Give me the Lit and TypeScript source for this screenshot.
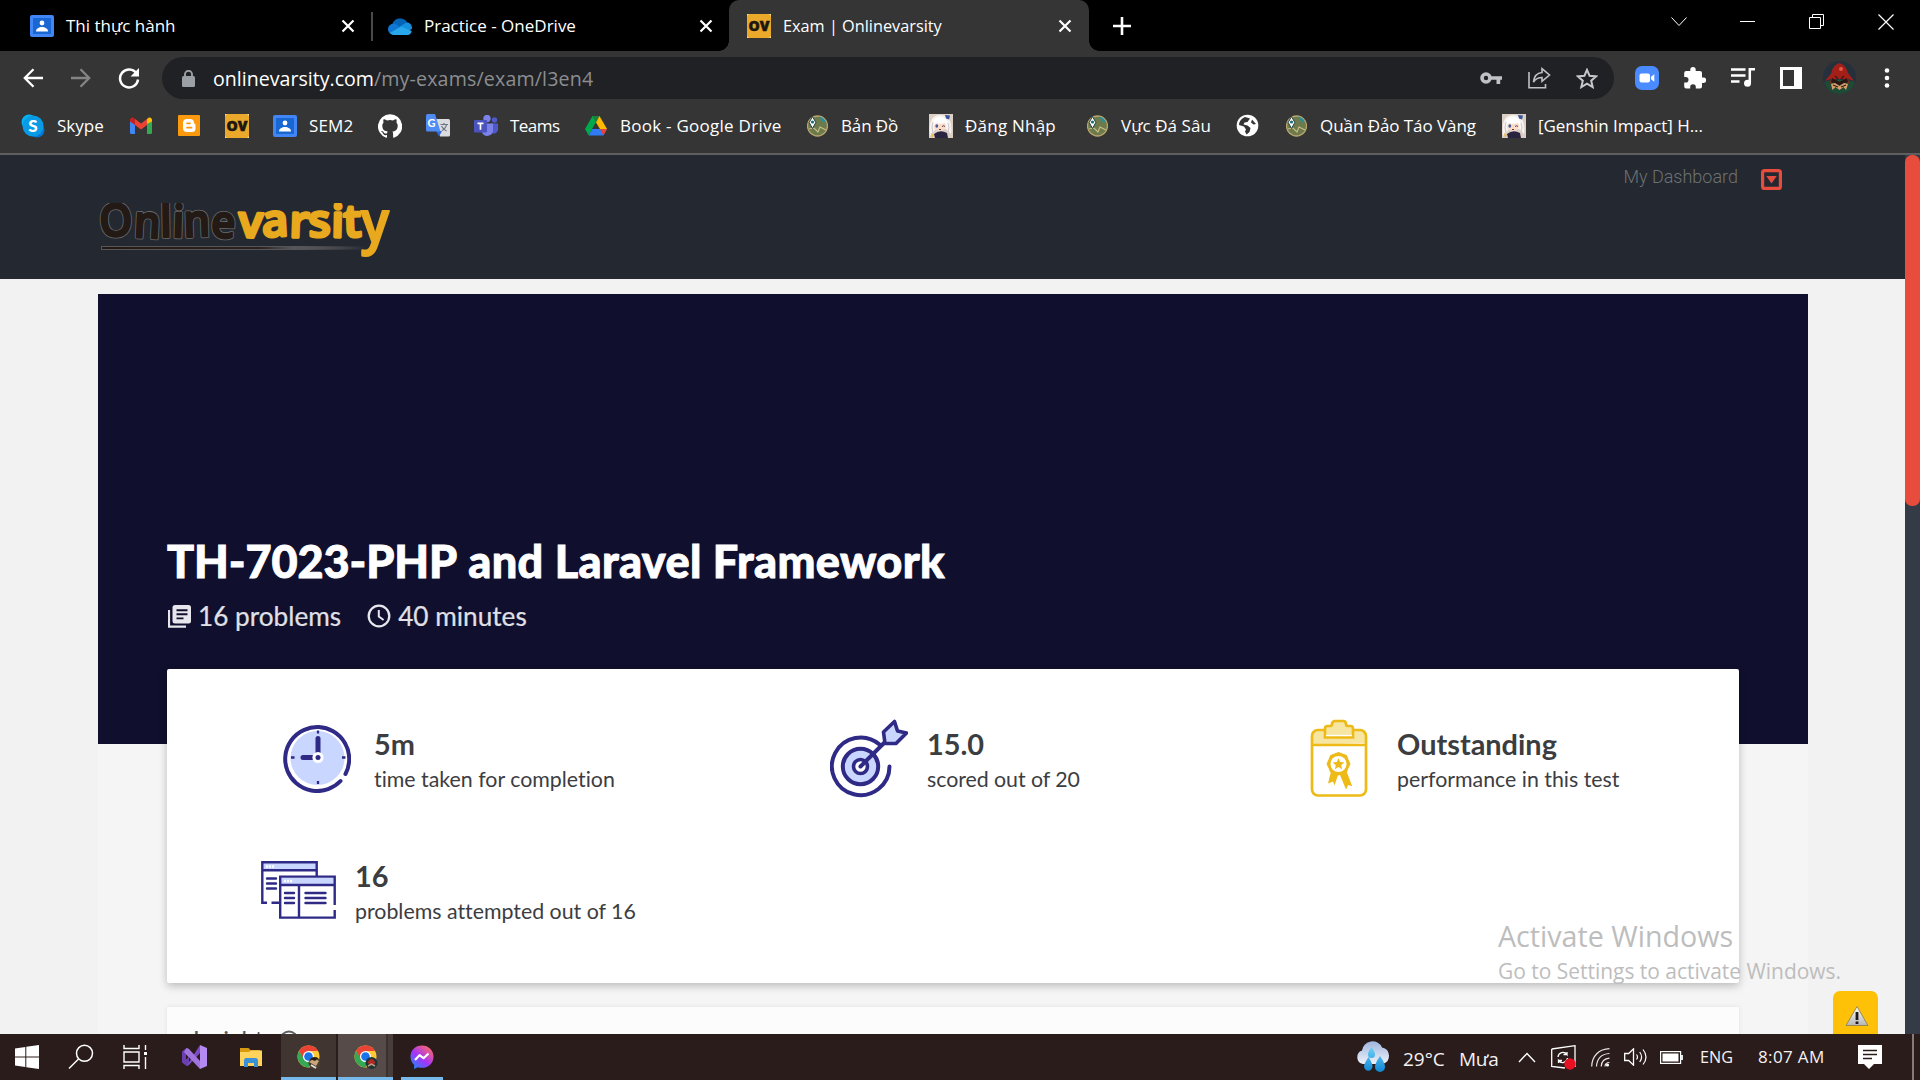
import { LitElement, html, css, svg, nothing } from "lit";
import type { TemplateResult } from "lit";
import { customElement } from "lit/decorators.js";
import { classMap } from "lit/directives/class-map.js";
import { styleMap } from "lit/directives/style-map.js";

const icon = (w: number, h: number, body: unknown, box = `0 0 ${w} ${h}`) =>
  html`<svg width=${w} height=${h} viewBox=${box} fill="none" style="display:block;flex:none">${body}</svg>`;

/* ---------- favicons ---------- */
const classroom = icon(24, 22, svg`
  <rect width="24" height="22" rx="2" fill="#4285f4"/>
  <rect x="3" y="3" width="18" height="16" fill="#1967d2"/>
  <circle cx="12" cy="8" r="2.4" fill="#fff"/>
  <path d="M6 16.500c0-3 3-4.500 6-4.500s6 1.500 6 4.500z" fill="#fff"/>`);
const oneDrive = icon(24, 18, svg`
  <path d="M4.500 7A8 7.500 0 0 1 19 5L13 11 2 13z" fill="#0364b8"/>
  <path d="M0 12.500A5.800 5.800 0 0 1 6.500 6.500L17 13l-5 4H5a5 5 0 0 1-5-4.500z" fill="#0f78d4"/>
  <path d="M12 9.500 18.500 5.200A5.800 5.800 0 0 1 24 11.500L20 15z" fill="#1490df"/>
  <path d="M1.800 16 13 9.500l10.600 4.500a4.500 4.500 0 0 1-4.100 4H5a5 5 0 0 1-3.200-2z" fill="#28a8ea"/>`);
const ov = icon(24, 24, svg`
  <rect width="24" height="24" fill="#fbe3a2"/><rect width="24" height="24" rx="3" fill="#eaa92b"/>
  <text x="1.500" y="16.800" textLength="21" lengthAdjust="spacingAndGlyphs" font-family="Open Sans, sans-serif" font-weight="800" font-size="13.500" fill="#1c1710" stroke="#1c1710" stroke-width=".5">OV</text>`);
const skype = icon(24, 24, svg`
  <circle cx="8" cy="8" r="7.500" fill="#00b4f5"/><circle cx="16" cy="16" r="7.500" fill="#0078d4"/><circle cx="12" cy="12" r="10.500" fill="#0a9be6"/>
  <text x="12" y="17.800" text-anchor="middle" font-family="Lato, sans-serif" font-weight="900" font-size="17" fill="#fff">S</text>`);
const gmail = icon(22, 17, svg`
  <path d="M0 2.500V15.500Q0 17 1.500 17H5V7z" fill="#4285f4"/><path d="M22 2.500V15.500Q22 17 20.500 17H17V7z" fill="#34a853"/>
  <path d="M17 7V2l1.300-1C20 0 22 1 22 3v1.500z" fill="#fbbc04"/><path d="M5 7V2l6 4.500L17 2v6l-6 4.500L5 8z" fill="#ea4335"/>
  <path d="M0 4.500V3C0 1 2 0 3.700 1L5 2v6z" fill="#c5221f"/>`);
const blogger = icon(22, 21, svg`
  <rect width="22" height="21" rx="1" fill="#fb9a0e"/>
  <path d="M9 4h3a4 4 0 0 1 4 4c0 1 1.500.600 1.500 2v3.500a3.500 3.500 0 0 1-3.500 3.500H9a4 4 0 0 1-4-4V8a4 4 0 0 1 4-4z" fill="#fff"/>
  <path d="M9 8.300h3M9 12.700h4.500" stroke="#fb9a0e" stroke-width="1.700" stroke-linecap="round"/>`);
const github = icon(24, 24, svg`
  <path fill="#fff" d="M12 .3a12 12 0 0 0-3.800 23.400c.6.100.8-.3.800-.6v-2c-3.300.700-4-1.600-4-1.600-.6-1.400-1.400-1.800-1.400-1.800-1-.7.1-.7.1-.7 1.200 0 1.900 1.200 1.900 1.200 1 1.800 2.800 1.300 3.500 1 0-.8.400-1.300.7-1.600-2.700-.3-5.500-1.300-5.500-6 0-1.200.500-2.300 1.300-3.100-.2-.4-.6-1.600 0-3.200 0 0 1-.3 3.400 1.200a11.500 11.500 0 0 1 6 0c2.300-1.500 3.300-1.200 3.300-1.200.700 1.600.200 2.800.1 3.200.8.800 1.300 1.900 1.300 3.200 0 4.600-2.800 5.600-5.500 5.900.500.4.900 1 .9 2.200v3.300c0 .3.100.7.800.6A12 12 0 0 0 12 .3"/>`);
const translate = icon(24, 23, svg`
  <path d="M9 5h13.500Q24 5 24 6.500V21Q24 22.500 22.500 22.500H14z" fill="#dadce0"/><path d="M10 17h6l-3 5.500z" fill="#3367d6"/>
  <path d="M1.500 0H9l5.500 17.500H1.500Q0 17.500 0 16V1.500Q0 0 1.500 0z" fill="#4f8df5"/>
  <text x="1.500" y="12.500" font-family="Lato, sans-serif" font-weight="700" font-size="11" fill="#fff">G</text>
  <path d="M14.500 10.500h7.500M18 9v1.500M20.500 10.500c-.5 3-3 5.500-4.500 6M15.500 12c1 2 3 4 5 5" stroke="#6b7682" stroke-width="1.200"/>`);
const teams = icon(24, 22, svg`
  <circle cx="20.500" cy="5" r="2.700" fill="#5059c9"/><circle cx="13" cy="3.500" r="3.700" fill="#7b83eb"/>
  <path d="M17 8.500h7v6a4 4 0 0 1-6 3.400z" fill="#5059c9"/><path d="M8 8.500h11V16a5.800 5.800 0 0 1-11 1.500z" fill="#7b83eb"/>
  <rect y="5" width="13" height="12.500" rx="1" fill="#4b53bc"/><path d="M3.500 8.300h6M6.500 8.300v6.500" stroke="#fff" stroke-width="1.700"/>`);
const drive = icon(22, 20, svg`
  <path d="M7.500 0h7L7 13 3.700 19.500 0 13z" fill="#00a94b"/><path d="M7.500 0h7L11 6.500z" fill="#188038"/>
  <path d="M14.500 0 22 13h-7L11 6.500z" fill="#ffba00"/><path d="M7 13h15l-3.700 6.500H3.700z" fill="#2f7af5"/><path d="M15 13h7l-3.700 6.500z" fill="#ea4335"/>`);
const map = icon(21, 22, svg`
  <circle cx="10.500" cy="11" r="10" fill="#6d7a4b" stroke="#b9a66e" stroke-width="1.300"/>
  <path d="M12 1.500c3 .5 6 3 7 6l-4-1z" fill="#2a8c9a"/><path d="M2 14l5-1 4 4 2-5 6 3" stroke="#c8bd86" stroke-width="1.100"/>
  <path d="M5.500 13.500 2.200 7.500 5.500 1.500l3.300 6z" fill="#fff" stroke="#13333a" stroke-width=".9"/><circle cx="5.500" cy="7" r="1.600" fill="#1d6f78"/>`);
const paimon = icon(24, 24, svg`
  <rect width="24" height="24" fill="#dccfc6"/><path d="M1 22C-1 8 3 1 11 1s13 6 11 19l-5-5H7z" fill="#f7f2ee"/>
  <ellipse cx="11" cy="12" rx="6" ry="5" fill="#fbdccb"/><path d="M3 13c0-6 3-10 8-10s8 4 8 10l-3-4-5 1-4-1z" fill="#fff"/>
  <path d="M4 8q-2 5 0 11M19 9q2 5 0 9" stroke="#cfc5cc" stroke-width="1"/>
  <ellipse cx="7.800" cy="12" rx="1.400" ry="1.800" fill="#3f5f9a"/><path d="M13 12.500q1.500-1.500 3 0M10 15.500h2" stroke="#5a4048"/>
  <path d="M5 20q6-5 13-1l1 5H6z" fill="#2b2440"/><path d="M16 1l5 .5-1 4-3-1z" fill="#3b5698"/><path d="M2 19l3 2-2 3z" fill="#e8bb4d"/>`);
const globe = icon(23, 23, svg`
  <circle cx="11.500" cy="11.500" r="10.800" fill="#fff"/>
  <path d="M9 3c-4 1.500-6 5-6 8l5 1.500 2 3-1 2 1.500 3 3-2.500 1-4-3-2.500-4-1 1-2 3-.5 2.500-3.500zM16 5.500l-1 3 2.500 2 2.500-.5z" fill="#353535"/>`);

/* ---------- toolbar icons ---------- */
const cross = icon(14, 14, svg`<path d="M1.500 1.500l11 11M12.500 1.500l-11 11" stroke="#fff" stroke-width="2.200"/>`);
const plus = icon(18, 18, svg`<path d="M9 0v18M0 9h18" stroke="#fff" stroke-width="2.600"/>`);
const back = icon(20, 20, svg`<path d="M20 10H2M10.500 1.200 1.800 10l8.700 8.800" stroke="#fff" stroke-width="2.300"/>`);
const forward = icon(20, 20, svg`<path d="M0 10h18M9.500 1.200 18.200 10l-8.700 8.800" stroke="#858585" stroke-width="2.300"/>`);
const reload = icon(22, 22, svg`<path d="M18.600 6.500A9 9 0 1 0 20 12.500" stroke="#fff" stroke-width="2.500"/><path d="M21 1v8.500h-8.500z" fill="#fff"/>`);
const lock = icon(13, 17, svg`<rect y="6" width="13" height="11" rx="1.500" fill="#9aa0a6"/><path d="M3 7V4.300a3.500 3.500 0 0 1 7 0V7" stroke="#9aa0a6" stroke-width="1.900"/>`);
const key = icon(22, 12, svg`<circle cx="6" cy="6" r="4" stroke="#c0c1c4" stroke-width="3.600"/><path d="M10 4.200h12v3.600h-1.800V12h-3.700V7.800H10z" fill="#c0c1c4"/>`);
const share = icon(23, 22, svg`<path d="M1 5v15.800h16.500V17" stroke="#c0c1c4" stroke-width="1.600"/><path d="M14 1.700 21.500 8 14 14.300v-3.800c-4 0-6.500 1.500-8.500 4.500.5-5 3-9 8.500-9.500z" stroke="#c0c1c4" stroke-width="1.600"/>`);
const star = icon(22, 21, svg`<path d="m11 1.800 2.600 6 6.500.6-4.900 4.300 1.500 6.400L11 15.700l-5.700 3.400 1.500-6.400L1.900 8.400l6.500-.6z" stroke="#c7c8ca" stroke-width="2"/>`);
const zoomCam = icon(24, 24, svg`<rect width="24" height="24" rx="7" fill="#4a8cff"/><rect x="4.500" y="7.500" width="10.500" height="9" rx="2" fill="#fff"/><path d="m16 10.800 3.300-2.600v7.600L16 13.200z" fill="#fff"/>`);
const puzzle = icon(22, 22, svg`<path fill="#fff" d="M19.500 10.500H18v-4.500a2 2 0 0 0-2-2h-4.300V2.700a2.700 2.700 0 0 0-5.400 0V4H2.200a2 2 0 0 0-2 2v4h1.500a2.800 2.800 0 0 1 0 5.600H.2v4a2 2 0 0 0 2 2h4v-1.500a2.800 2.800 0 0 1 5.600 0v1.500H16a2 2 0 0 0 2-2v-3.700h1.500a2.700 2.700 0 0 0 0-5.400z"/>`);
const music = icon(24, 19, svg`<path d="M0 1.500h14.500M0 7.500h14.500M0 13.500h8.500" stroke="#fff" stroke-width="2.300"/><path d="M18.800 15V1.300H24" stroke="#fff" stroke-width="2.500"/><circle cx="16.500" cy="15.300" r="3.500" fill="#fff"/>`);
const panel = icon(22, 22, svg`<rect x="1.500" y="1.500" width="19" height="19" stroke="#fff" stroke-width="3"/><path d="M14 0h8v22h-8z" fill="#fff"/>`);
const avatar = icon(33, 33, svg`<circle cx="16.500" cy="16.500" r="16.500" fill="#25303d"/><path d="M1 21q14-5 31 0-4 12-15.500 12T1 21z" fill="#1f4a35"/>
  <path d="M16.500 2C11 4 9 8 8.500 12L2 20l6-2-1 5 6-5h8l5 5-1-5 6 2-6-8c-1-4-3-8-8.500-10z" fill="#a32019"/>
  <path d="m9 17 7.500 4 7.500-4 1 4-8.500 3L8 21z" fill="#2b1613"/>
  <path d="m8 23 4-1 4.500 3 4.500-3 4 1-2 6-2.500-3-4 3-4-3-3 3z" fill="#d9a06c"/><path d="m10 24 5 2M23 24l-5 2M12 15l3 3M21 15l-3 3" stroke="#3b1613" stroke-width="1.300"/><circle cx="18" cy="8" r="2" fill="#e5584c"/>`);
const kebab = icon(6, 20, svg`<circle cx="3" cy="2.500" r="2.300" fill="#fff"/><circle cx="3" cy="10" r="2.300" fill="#fff"/><circle cx="3" cy="17.500" r="2.300" fill="#fff"/>`);

/* ---------- statistic icons ---------- */
const INK = "#2f2a86", TINT = "#c9d6ff";
const clock = icon(68, 69, svg`
  <circle cx="34.500" cy="34" r="27" fill="${TINT}"/>
  <path d="M57.500 57A32 32 0 1 1 62.500 50" stroke="${INK}" stroke-width="4" stroke-linecap="round"/>
  <path d="M35 6.500v3M35 57v3M8 33.500h3.500M59 33.500h3.500" stroke="${INK}" stroke-width="2.300"/>
  <path d="M35 30V14.500M31 33.500H20" stroke="${INK}" stroke-width="5" stroke-linecap="round"/>
  <circle cx="35" cy="33.500" r="5.600" fill="#fff"/><circle cx="35" cy="33.500" r="2.500" fill="${INK}"/>`);
const target = icon(78, 79, svg`
  <path d="M49.500 25.500A28.800 28.800 0 1 0 59.500 47.500" stroke="${INK}" stroke-width="4" stroke-linecap="round"/>
  <circle cx="30.500" cy="47.500" r="17.700" fill="${TINT}" stroke="${INK}" stroke-width="4"/>
  <circle cx="30.500" cy="47.500" r="7" fill="#fff" stroke="${INK}" stroke-width="3.600"/>
  <path d="M30.500 47.500 54 24" stroke="${INK}" stroke-width="4" stroke-linecap="round"/>
  <path d="m64.500 2.500 3 9.500 9 2L66 24.500H55L53.500 13z" fill="${TINT}" stroke="${INK}" stroke-width="3.600" stroke-linejoin="round"/>`);
const clipboard = icon(58, 78, svg`
  <path d="M2 26V16q0-5 5-5h44q5 0 5 5v8z" fill="#f6e6a2"/>
  <rect x="2" y="11" width="54" height="65.500" rx="6" stroke="#edba17" stroke-width="2.700"/>
  <path d="M2 26h54" stroke="#edba17" stroke-width="2.700"/>
  <path d="M15 18.500V9.500q0-2.500 2.500-2.500H20q2 0 2-2t2.500-3h8.500q3 0 3 3 0 2 2 2h2.500Q43 7 43 9.500v9z" fill="#f6e6a2" stroke="#edba17" stroke-width="2.700"/>
  <path d="M16 16.500h26" stroke="#fff" stroke-width="1.300"/>
  <path d="M21 52.500 18 64.500l5-2 1.500 4L28 56h2l6 14.500 2.200-4.500 4 1.200-5.700-15z" fill="#edba17"/>
  <path d="m28.500 33.500 4 1.500 4 1.500 1.500 4 2 4.500-2 4-1.500 4-4 1.500-4 1.500-4-1.500-4-1.500-1.500-4-2-4 2-4.500 1.500-4 4-1.500z" fill="#edba17" stroke="#edba17" stroke-linejoin="round"/>
  <circle cx="28.500" cy="45" r="8" fill="#fff"/>
  <path d="m28.500 39.300 1.700 3.800 4.100.4-3.100 2.700.9 4-3.600-2.100-3.600 2.100.9-4-3.100-2.700 4.100-.4z" fill="#edba17"/>`);
const windows = icon(75, 58, svg`
  <path d="M2 2h54v7H2zM20 17h53v6H20z" fill="${TINT}"/>
  <path d="M6 41.700H1.300V1.200h54.400V15M1.300 9.300h54.400M10.500 41.700H18" stroke="${INK}" stroke-width="2.400"/>
  <path d="M73.700 44V15.600H19.200v41H73.700V49M19.200 24h54.500M38 24v32" stroke="${INK}" stroke-width="2.400"/>
  <path d="M6 17.500h9M6 22.500h9M6 27.500h9M24 32h9M24 37h9M24 42h9M44.500 32h20M44.500 37h20M44.500 42h20" stroke="${INK}" stroke-width="2.400" stroke-linecap="round"/>
  <path d="M5 5.500h8M23 20h8" stroke="#fff" stroke-width="2.300" stroke-dasharray="2 1"/>`);
const books = icon(23, 23, svg`
  <path d="M1 5v16.700h17" stroke="#e6e6ec" stroke-width="2.200"/><rect x="4.500" width="18.500" height="18.500" rx="2.500" fill="#e6e6ec"/>
  <path d="M8.500 5.200h11M8.500 9.300h11M8.500 13.400h7" stroke="#10102e" stroke-width="1.900"/>`);
const timer = icon(24, 24, svg`<circle cx="12" cy="12" r="10.300" stroke="#e6e6ec" stroke-width="2.300"/><path d="M11.800 6v6.500l4.800 3.500" stroke="#e6e6ec" stroke-width="2"/>`);

/* ---------- taskbar icons ---------- */
const chrome = (face: TemplateResult | ReturnType<typeof svg>) => icon(24, 24, svg`
  <circle cx="11.500" cy="11.500" r="11" fill="#fcc934"/>
  <path d="M2 6a11 11 0 0 1 19.100 0H11.500L6.500 14.500z" fill="#ea4335"/>
  <path d="M2 6a11 11 0 0 0 9.500 16.500l4.800-8.500H7z" fill="#34a853"/>
  <circle cx="11.500" cy="11.500" r="5.500" fill="#fff"/><circle cx="11.500" cy="11.500" r="4.300" fill="#1a73e8"/>${face}`);
const chromeA = chrome(svg`<circle cx="17.500" cy="18" r="6" fill="#4b3d30"/><path d="M12 17q5-5 10-1l-3 5z" fill="#c8a57a"/><path d="M13 14q4-3 8-1l-3 3z" fill="#211a16"/><path d="M14 20l5 3" stroke="#ddd" stroke-width="2"/>`);
const chromeB = chrome(svg`<circle cx="17.500" cy="18" r="6" fill="#20323a"/><path d="M13.500 18q4-8 8 0l-4 2z" fill="#b02a22"/><path d="m14 21 3.500-2 3.500 2" stroke="#c79a77" stroke-width="1.500"/>`);
const winLogo = icon(24, 24, svg`<path fill="#fff" d="M0 3.400 10.300 2v9.500H0zM11.300 1.800 24 0v11.500H11.300zM0 12.500h10.300V22L0 20.600zM11.300 12.500H24V24l-12.700-1.800z"/>`);
const search = icon(26, 26, svg`<circle cx="16.500" cy="9.300" r="8" stroke="#fff" stroke-width="1.500"/><path d="M10.500 15 1 24.500" stroke="#fff" stroke-width="1.500"/>`);
const taskView = icon(25, 24, svg`<path d="M1 0v3.500h15V0M1 24v-3.500h15V24M1 7h15v10H1zM22.500 0v5M22.500 12v12" stroke="#fff" stroke-width="1.400"/><rect x="21" y="7" width="3" height="3" fill="#fff"/>`);
const vs = icon(25, 24, svg`
  <path fill-rule="evenodd" d="M0 6.500 4.500 3 7 4v16l-2.500 1L0 17.500zM4 9.500v5L6.500 12z" fill="#6a3fb0"/>
  <path d="M4.500 21 18 0v8L7 20z" fill="#7a4cc0"/><path d="m18 0 7 3v18l-7 3z" fill="#b48af0"/>
  <path d="M4.500 3 7 4l11 12v8L2 7z" fill="#a173dc"/>`);
const folder = icon(22, 19, svg`<path d="M0 0h8.500l2 2H20v5H0z" fill="#d99a12"/><path d="M0 4h9l2-1.500h11V18H0z" fill="#ffd35c"/><path d="M4 19v-6.500Q4 10 6 10h10q2 0 2 2.500V19h-4v-4H8v4z" fill="#3a91d8"/>`);
const messenger = icon(24, 24, svg`
  <defs><linearGradient id="mg" x1="0" y1="1" x2=".8" y2="0"><stop offset="0" stop-color="#0695ff"/><stop offset=".5" stop-color="#a334fa"/><stop offset="1" stop-color="#ff6968"/></linearGradient></defs>
  <path fill="url(#mg)" d="M12 .5C5.300.5.500 5.300.500 11.700c0 3.300 1.400 6.200 3.600 8.100V24l3.700-1.800c1.300.4 2.700.6 4.200.6 6.700 0 11.500-4.800 11.500-11.100S18.700.5 12 .5z"/><path d="m5 15 4.500-4.800 4 3 5-4.700" stroke="#fff" stroke-width="2.200" stroke-linejoin="round"/>`);
const weather = icon(34, 34, svg`
  <defs><linearGradient id="cl" x2="0" y2="1"><stop stop-color="#9fb6de"/><stop offset="1" stop-color="#eef2fa"/></linearGradient><linearGradient id="dr" x2="0" y2="1"><stop stop-color="#6fd0f5"/><stop offset="1" stop-color="#0f87d6"/></linearGradient></defs>
  <path d="M7 24a7 7 0 0 1-1-13.500A10.500 10.500 0 0 1 26 7.500 8.500 8.500 0 0 1 27 24z" fill="url(#cl)"/>
  <path d="M15.500 7c2.500 4 3.500 5.500 3.500 7.500a3.500 3.500 0 0 1-7 0c0-2 1-3.500 3.500-7.500zM12.500 17c3 5 4 7 4 9.500a4.200 4.200 0 0 1-8.400 0c0-2.500 1.400-4.500 4.400-9.500zM24 16c3.500 5.500 5 8 5 11a5 5 0 0 1-10 0c0-3 1.500-5.500 5-11z" fill="url(#dr)"/>`);
const chevronUp = icon(18, 11, svg`<path d="m1 10 8-8.500 8 8.500" stroke="#fff" stroke-width="1.400"/>`);
const update = icon(25, 25, svg`<path d="M.7 4 24 .7V22M.7 4v17.500L14 23" stroke="#fff" stroke-width="1.300"/><path d="M7 12a5 5 0 0 1 9-2.500V7M16 9.500h-3.500M16.500 13a5 5 0 0 1-9 2.500V18M7.500 15.500H11" stroke="#fff" stroke-width="1.300"/><circle cx="19" cy="19" r="5.700" fill="#e81123"/>`);
const wifi = icon(19, 19, svg`<path d="M.7 18.500C1 8 8 1 18.500.7M5.500 18.500c.5-8 5-12.500 13-13M10.200 18.500c.3-5 3.300-8 8.300-8.300" stroke="#e8e6e6" stroke-width="1.200"/><path d="M14 18.500c0-2.500 2-4 4.500-4" stroke="#e8e6e6" stroke-width="1.200"/><circle cx="16.500" cy="17" r="1.600" fill="#fff"/>`);
const speaker = icon(23, 18, svg`<path d="M.7 5.500h4L9.500.9v16.200l-4.800-4.600h-4z" stroke="#fff" stroke-width="1.300"/><path d="M12.500 6.500q2 2.500 0 5M15.700 4q3.800 5 0 10M19 1.500q6 7.500 0 15" stroke="#fff" stroke-width="1.200"/>`);
const battery = icon(23, 13, svg`<rect x=".6" y=".6" width="20" height="11.800" stroke="#fff" stroke-width="1.200"/><rect x="2.500" y="2.500" width="16" height="8" fill="#fff"/><path d="M22 4v5" stroke="#fff" stroke-width="1.800"/>`);
const note = icon(24, 24, svg`<path d="M0 0h24v19h-8l-5 5-5-5H0z" fill="#fff"/><path d="M5 5.500h14M5 9.500h14M5 13.500h9" stroke="#2a1c1a" stroke-width="1.300"/>`);

interface Bookmark { art: TemplateResult; label?: string; spacing?: number }
const BOOKMARKS: Bookmark[] = [
  { art: skype, label: "Skype" }, { art: gmail }, { art: blogger }, { art: ov },
  { art: classroom, label: "SEM2", spacing: 0.17 }, { art: github }, { art: translate },
  { art: teams, label: "Teams", spacing: -0.55 },
  { art: drive, label: "Book - Google Drive", spacing: 0.26 },
  { art: map, label: "Bản Đồ", spacing: -0.13 }, { art: paimon, label: "Đăng Nhập", spacing: 0.23 },
  { art: map, label: "Vực Đá Sâu", spacing: 0.06 }, { art: globe },
  { art: map, label: "Quần Đảo Táo Vàng", spacing: -0.06 },
  { art: paimon, label: "[Genshin Impact] H...", spacing: -0.05 },
];

@customElement("browser-chrome")
export class BrowserChrome extends LitElement {
  static styles = css`
    :host { display: block; background: #353535; color: #fff; font: 17px/24px "Open Sans", "Noto Sans", sans-serif; border-bottom: 2px solid #5f5f5f; height: 153px; white-space: nowrap; }
    .strip { display: flex; height: 51px; background: #000; }
    .tab { display: flex; align-items: center; box-sizing: border-box; }
    .tab .name { flex: 1; margin-left: 12px; }
    .first { width: 371px; padding: 0 16px 0 30px; }
    .second { width: 358px; padding: 0 16px 0 15px; border-left: 2px solid transparent; border-image: linear-gradient(#000 24%, #4a4a4a 24%, #4a4a4a 80%, #000 80%) 1; }
    .active { width: 360px; padding: 0 17px 0 18px; background: #353535; border-radius: 10px 10px 0 0; position: relative; }
    .active .name { font-size: 16.300px; letter-spacing: 0; }
    .active::before, .active::after { content: ""; position: absolute; bottom: 0; width: 10px; height: 10px; }
    .active::before { right: 100%; background: radial-gradient(circle at 0 0, transparent 9.500px, #353535 10px); }
    .active::after { left: 100%; background: radial-gradient(circle at 100% 0, transparent 9.500px, #353535 10px); }
    .new { display: grid; place-items: center; width: 66px; }
    .wins { display: grid; grid-template-columns: repeat(4, 69px); justify-items: center; align-items: center; margin-left: auto; height: 43px; }
    .bar { display: flex; align-items: center; height: 53px; padding: 0 9px; }
    .cell { display: grid; place-items: center; width: 48px; flex: none; }
    .omni { display: flex; align-items: center; flex: none; box-sizing: border-box; width: 1452px; height: 42px; margin: 1px 9px 0; padding: 0 3px 0 20px; border-radius: 21px; background: #202124; font-size: 19.600px; }
    .url { flex: 1; margin-left: 18px; padding-top: 2px; }
    .path { color: #8c8d90; letter-spacing: 0.160px; }
    .marks { display: grid; grid-template-columns: 108px 48px 48px 48px 105px 48px 48px 110px 221px 124px 156px 150px 49px 218px 200px; align-items: center; height: 43px; padding-left: 21px; }
    .mark { display: flex; align-items: center; gap: 12px; }
    .fav { display: grid; place-items: center; width: 24px; flex: none; }
  `;
  render() {
    return html`
      <div class="strip">
        <div class="tab first">${classroom}<span class="name">Thi thực hành</span>${cross}</div>
        <div class="tab second">${oneDrive}<span class="name">Practice - OneDrive</span>${cross}</div>
        <div class="tab active">${ov}<span class="name">Exam | Onlinevarsity</span>${cross}</div>
        <div class="new">${plus}</div>
        <div class="wins">
          ${icon(16, 9, svg`<path d="m.5.5 7.500 8 7.500-8" stroke="#fff"/>`)}
          ${icon(15, 1, svg`<path d="M0 .5h15" stroke="#fff"/>`)}
          ${icon(15, 15, svg`<path d="M.5 3.500h11v11H.5zM3.500 3.500v-3h11v11h-3" stroke="#fff"/>`)}
          ${icon(16, 16, svg`<path d="m.5.5 15 15M15.500.5l-15 15" stroke="#fff" stroke-width="1.200"/>`)}
        </div>
      </div>
      <div class="bar">
        <div class="cell">${back}</div><div class="cell">${forward}</div><div class="cell">${reload}</div>
        <div class="omni">${lock}<span class="url">onlinevarsity.com<span class="path">/my-exams/exam/l3en4</span></span>
          <div class="cell">${key}</div><div class="cell">${share}</div><div class="cell">${star}</div></div>
        ${[zoomCam, puzzle, music, panel, avatar, kebab].map((i) => html`<div class="cell">${i}</div>`)}
      </div>
      <div class="marks">
        ${BOOKMARKS.map((b) => html`<div class="mark"><span class="fav">${b.art}</span>${b.label
          ? html`<span style=${styleMap({ letterSpacing: `${b.spacing ?? 0}px` })}>${b.label}</span>` : nothing}</div>`)}
      </div>`;
  }
}

const STATS = [
  { slot: "time", art: clock, value: "5m", note: "time taken for completion" },
  { slot: "score", art: target, value: "15.0", note: "scored out of 20" },
  { slot: "grade", art: clipboard, value: "Outstanding", note: "performance in this test" },
  { slot: "count", art: windows, value: "16", note: "problems attempted out of 16" },
];

@customElement("exam-page")
export class ExamPage extends LitElement {
  static styles = css`
    :host { display: flex; position: relative; overflow: hidden; background: #f2f2f2; color: #3c3d41; font-family: Lato, sans-serif; font-variant-ligatures: none; white-space: nowrap; }
    .body { flex: 1; }
    .head { display: flex; justify-content: space-between; box-sizing: border-box; height: 124px; padding: 0 123px 0 98px; background: #242830; }
    .logo { display: block; margin-top: 48px; }
    .user { display: flex; align-items: flex-start; gap: 23px; padding-top: 10px; color: #6d7172; font: 300 18px/24px Roboto, sans-serif; }
    .drop { margin-top: 4px; }
    .wrap { width: 1710px; margin: 15px 0 0 98px; background: #f5f5f5; height: 800px; }
    .hero { box-sizing: border-box; height: 450px; padding: 240px 0 0 69px; background: #10102e; color: #fff; }
    .title { margin: 0; font-size: 45px; font-weight: 900; line-height: 54px; letter-spacing: 0.380px; -webkit-text-stroke: 0.900px #fff; }
    .code { letter-spacing: -0.100px; }
    .meta { display: flex; align-items: center; margin: 12px 0 0 1px; color: #e0e0e6; font-size: 26.200px; line-height: 32px; -webkit-text-stroke: 0.200px #e0e0e6; }
    .meta svg { display: block; }
    .meta .txt { margin: 0 26px 0 7px; }
    .card { position: relative; display: grid; grid-template-columns: repeat(3, 507px); grid-template-rows: 80px 80px; row-gap: 52px; box-sizing: border-box; width: 1572px; height: 314px; margin: -75px 0 0 69px; padding: 51px 24px; background: #fff; border-radius: 2px; box-shadow: 0 3px 9px rgba(0, 0, 0, 0.240); }
    .stat { display: flex; align-items: center; }
    .stat svg { margin-bottom: 4px; }
    .time { padding-left: 92px; gap: 23px; }
    .score { padding-left: 132px; gap: 19px; }
    .grade { padding-left: 105px; gap: 29px; }
    .count { padding-left: 70px; gap: 19px; }
    .val { font-size: 28.900px; font-weight: 700; line-height: 38px; }
    .sub { font-size: 21.350px; line-height: 32px; }
    .score .val, .score .sub { letter-spacing: -0.050px; }
    .next { display: flex; gap: 5px; width: 1546px; margin: 24px 0 0 69px; padding: 16px 0 0 26px; background: #fcfcfc; box-shadow: 0 0 5px rgba(0, 0, 0, 0.080); font-size: 24px; line-height: 32px; color: #55565a; }
    .info { padding-top: 7px; }
    .track { width: 15px; background: #343b47; }
    .thumb { height: 351px; border-radius: 7px; background: #e74c3c; }
    .mark { position: absolute; left: 1498px; top: 763px; color: #bdbdbd; font: 28.650px/36px "Open Sans", sans-serif; }
    .mark .go { font-size: 20.950px; line-height: 34px; }
    .warn { position: absolute; left: 1833px; top: 836px; display: grid; place-items: center; box-sizing: border-box; width: 45px; height: 50px; padding-left: 2px; border-radius: 7px; background: #fec107; }
  `;
  render() {
    return html`
      <div class="body">
        <div class="head">
          <svg class="logo" width="294" height="56" viewBox="0 0 294 56">
            <defs><linearGradient id="rule"><stop stop-color="#231a18"/><stop offset=".6" stop-color="#2b2220"/><stop offset=".72" stop-color="#55565a"/><stop offset="1" stop-color="#55565a" stop-opacity="0"/></linearGradient>
              <linearGradient id="edge"><stop stop-color="#5a5654"/><stop offset=".75" stop-color="#55565a"/><stop offset="1" stop-color="#55565a" stop-opacity="0"/></linearGradient></defs>
            <g font-family="Open Sans, sans-serif" font-weight="600" font-size="45" stroke-linejoin="round">
              <text x="2" y="34" rotate="-3 3 -1 2 -2 3" textLength="135" lengthAdjust="spacingAndGlyphs" fill="#6a6a6c" stroke="#6a6a6c" stroke-width="4">Online</text>
              <text x="2" y="34" rotate="-3 3 -1 2 -2 3" textLength="135" lengthAdjust="spacingAndGlyphs" fill="#231a16" stroke="#231a16" stroke-width="2.400">Online</text>
              <text x="140" y="34" rotate="2 -3 2 -2 1 -2" textLength="124" lengthAdjust="spacingAndGlyphs" fill="#e9a91f" stroke="#e9a91f" stroke-width="3">varsit</text>
              <text x="263" y="39" textLength="28" lengthAdjust="spacingAndGlyphs" font-size="58" fill="#e9a91f" stroke="#e9a91f" stroke-width="2">y</text>
            </g>
            <rect x="3" y="43" width="266" height="4" fill="url(#edge)"/>
            <rect x="4" y="44" width="264" height="2" fill="url(#rule)"/>
          </svg>
          <div class="user"><span>My Dashboard</span>
            <svg class="drop" width="21" height="21" viewBox="0 0 21 21"><rect x="1.600" y="1.600" width="17.800" height="17.800" rx="2" fill="none" stroke="#e74c3c" stroke-width="3.200"/><path d="M5.300 7h10.400l-5.200 7.500z" fill="#e74c3c"/></svg>
          </div>
        </div>
        <div class="wrap">
          <div class="hero">
            <h1 class="title"><span class="code">TH-7023-PHP</span> and Laravel Framework</h1>
            <div class="meta">${books}<span class="txt">16 problems</span>${timer}<span class="txt">40 minutes</span></div>
          </div>
          <div class="card">
            ${STATS.map((s) => html`<div class=${classMap({ stat: true, [s.slot]: true })}>${s.art}<div><div class="val">${s.value}</div><div class="sub">${s.note}</div></div></div>`)}
          </div>
          <div class="next"><span>Insights</span><div class="info">${icon(20, 20, svg`<circle cx="10" cy="10" r="8.500" stroke="#606166" stroke-width="1.800"/><path d="M10 9v6" stroke="#606166" stroke-width="2"/>`)}</div></div>
        </div>
      </div>
      <div class="track"><div class="thumb"></div></div>
      <div class="warn">${icon(24, 22, svg`<defs><linearGradient id="wg" x2="0" y2="1"><stop stop-color="#fff"/><stop offset="1" stop-color="#b5b5b5"/></linearGradient></defs><path d="M12 1.500 23 20.500H1z" fill="url(#wg)" stroke="#9a8a50" stroke-linejoin="round"/><path d="M12 7v8M12 16.500v2.500" stroke="#1b1b1b" stroke-width="2.800"/>`)}</div>
      <div class="mark"><div>Activate Windows</div><div class="go">Go to Settings to activate Windows.</div></div>`;
  }
}

@customElement("task-bar")
export class TaskBar extends LitElement {
  static styles = css`
    :host { display: flex; justify-content: space-between; height: 46px; background: #2a1c1a; color: #f4f2f2; font: 17px/24px "Open Sans", sans-serif; white-space: nowrap; }
    .apps { display: grid; grid-template-columns: 54px 54px 54px 64px 55px 55px 55px 43px; }
    .app { display: grid; place-items: center; box-sizing: border-box; }
    .folder { padding-right: 5px; }
    .run { border-bottom: 3px solid #76b9ed; padding-top: 3px; }
    .open { background: #413532; }
    .front { margin: 0 -2px 0 2px; background: linear-gradient(90deg, #574b49 48px, #3b302e 48px, #3b302e 50px, #483d3b 50px); }
    .chat { margin: 0 -9px 0 10px; }
    .tray { display: grid; grid-template-columns: 47px 56px 59px 33px 40px 33px 36px 40px 58px 100px 54px 8px; align-items: center; }
    .temp { font-size: 19px; padding-top: 4px; }
    .tight { letter-spacing: -0.250px; }
    .lang { font-size: 16.200px; }
    .hour { letter-spacing: 0.350px; }
    .edge { align-self: stretch; border-left: 2px solid #857b79; }
  `;
  render() {
    return html`
      <div class="apps">
        <div class="app">${winLogo}</div><div class="app">${search}</div><div class="app">${taskView}</div>
        <div class="app">${vs}</div><div class="app folder">${folder}</div>
        <div class="app run open">${chromeA}</div><div class="app run front">${chromeB}</div><div class="app run chat">${messenger}</div>
      </div>
      <div class="tray">
        ${weather}<span class="temp">29°C</span><span class="temp tight">Mưa</span>${chevronUp}${update}${wifi}${speaker}${battery}
        <span class="lang">ENG</span><span class="hour">8:07 AM</span>${note}<span class="edge"></span>
      </div>`;
  }
}

@customElement("app-root")
export class AppRoot extends LitElement {
  static styles = css`
    :host { display: grid; grid-template-rows: 155px 879px 46px; width: 1920px; height: 1080px; overflow: hidden; }
  `;
  render() {
    return html`<browser-chrome></browser-chrome><exam-page></exam-page><task-bar></task-bar>`;
  }
}
